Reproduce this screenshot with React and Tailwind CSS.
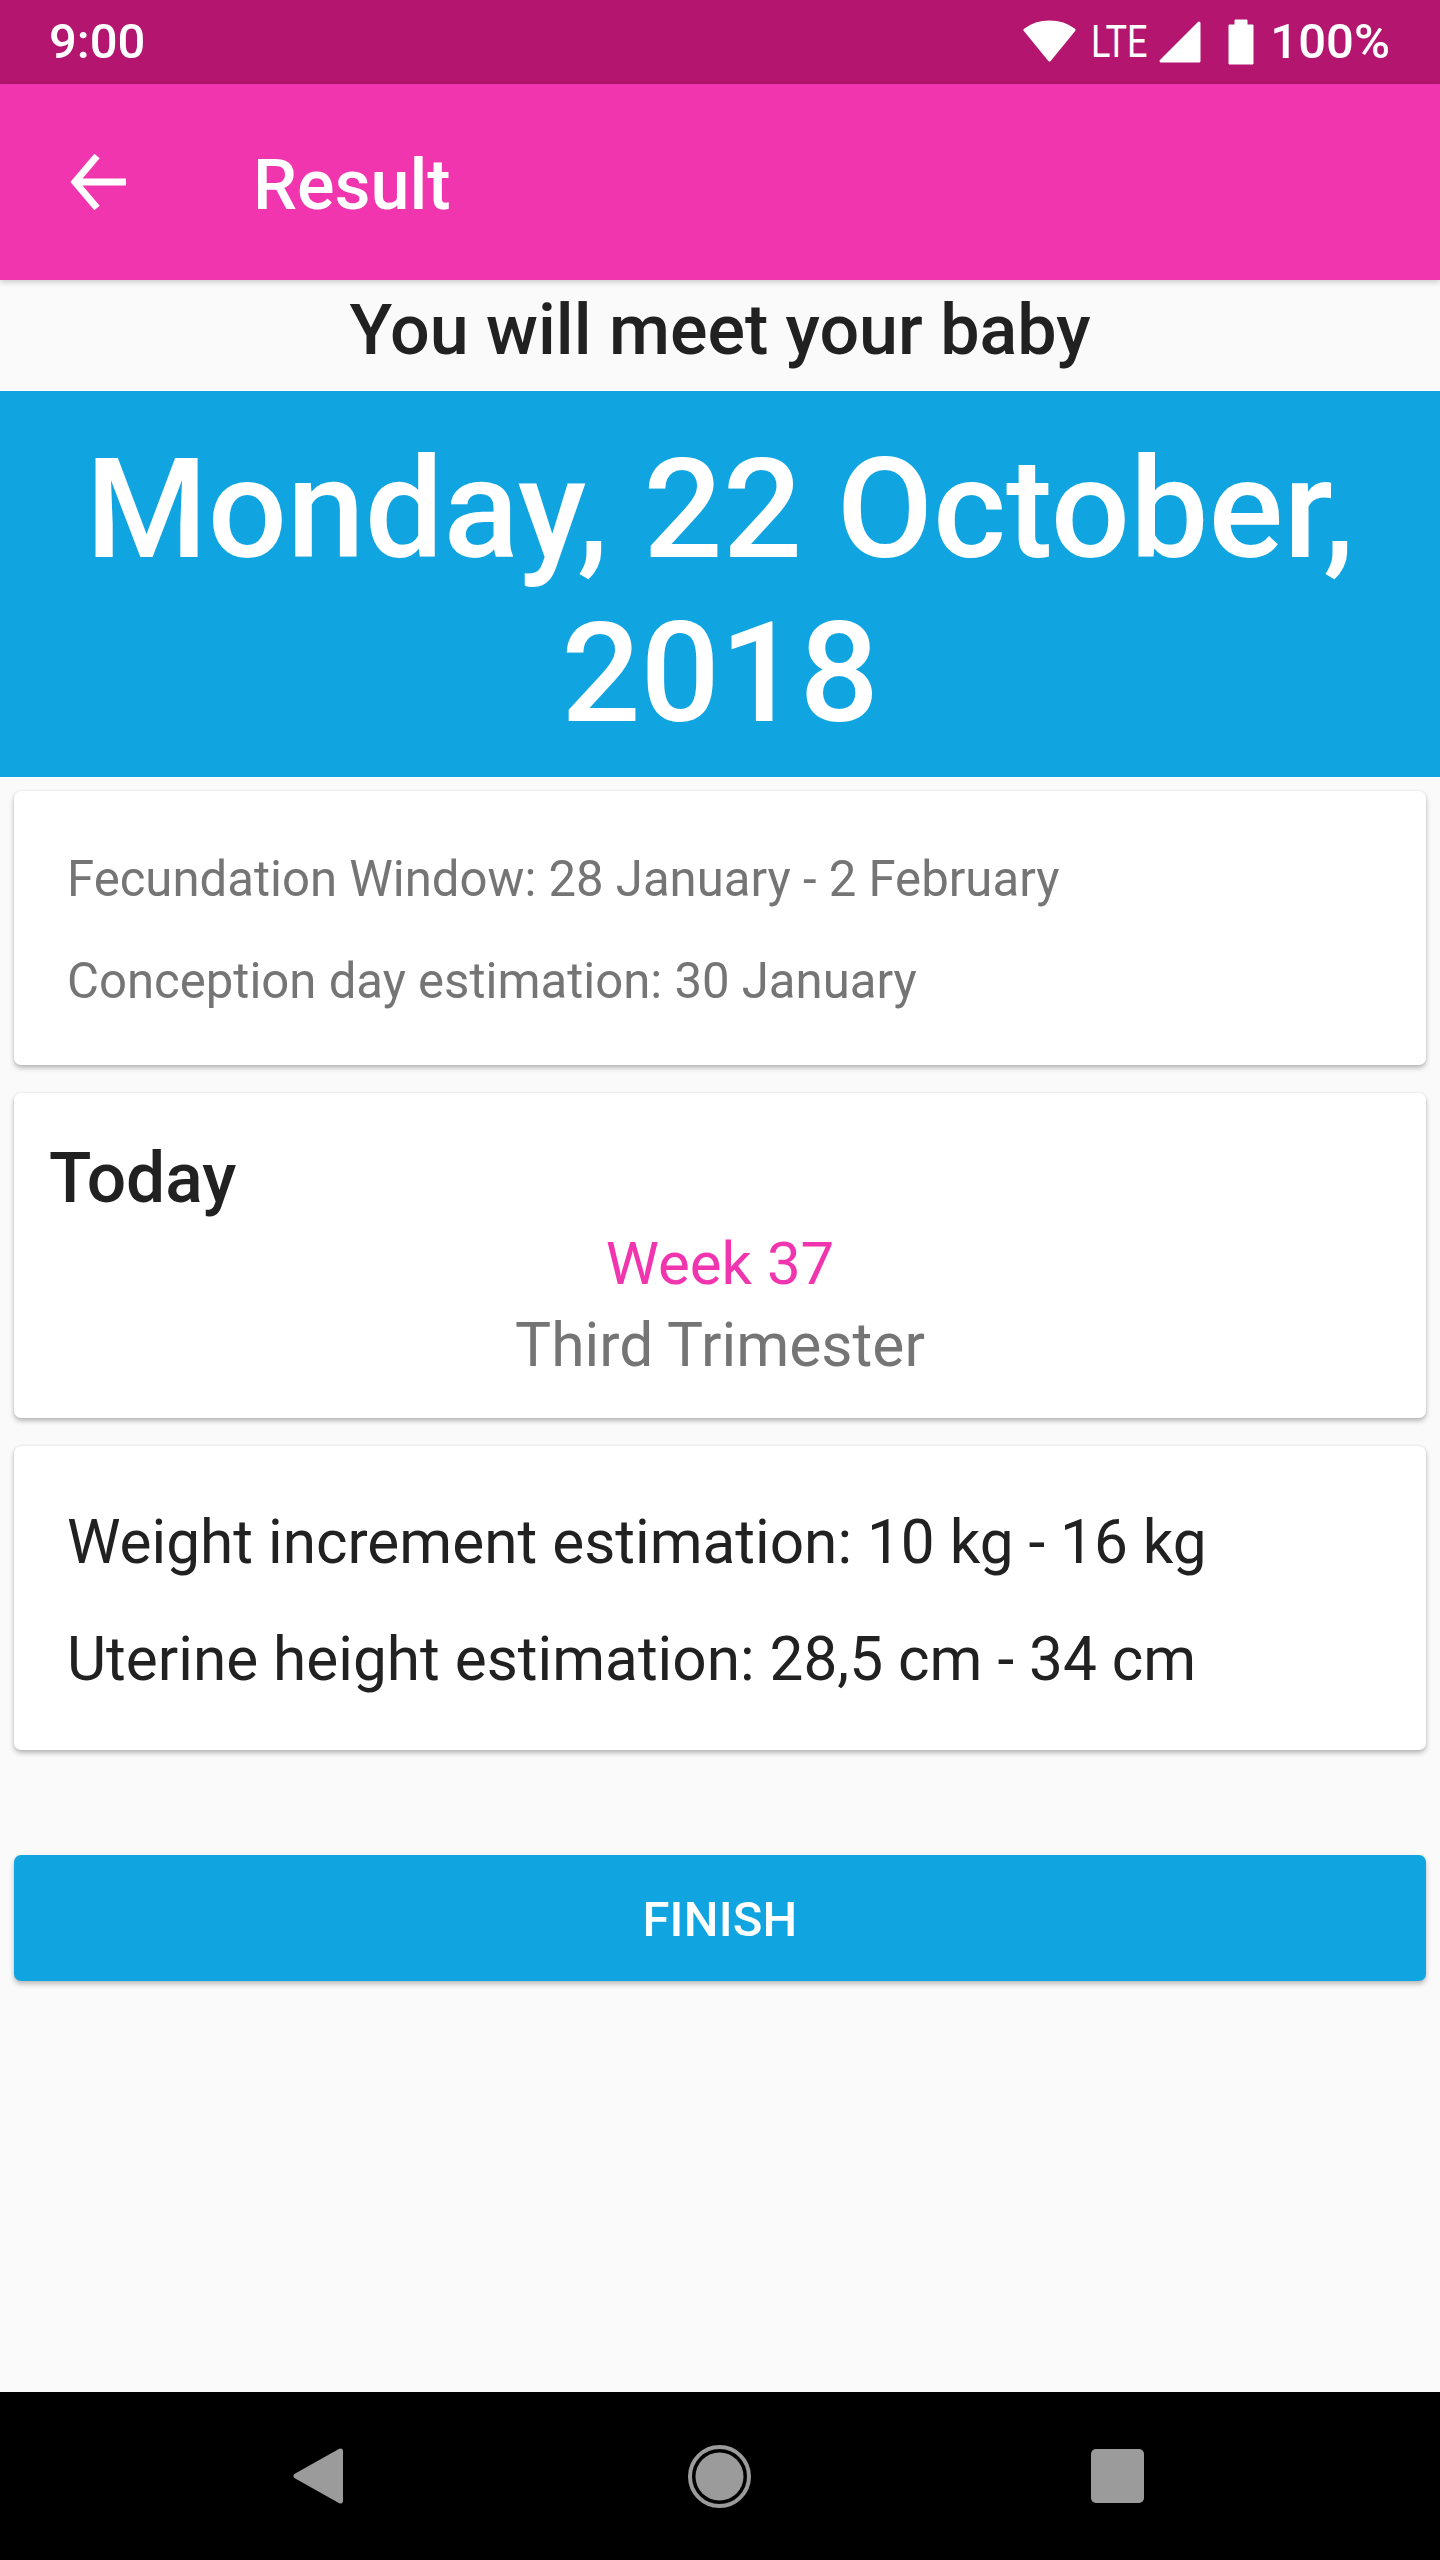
export default function App() {
  const card = "mx-[14px] rounded-[7px] bg-white shadow-[0_3px_5px_rgba(0,0,0,0.26),0_0_3px_rgba(0,0,0,0.08)]";
  return (
    <div className="flex h-[2560px] w-[1440px] flex-col overflow-hidden bg-[#fafafa] font-['Roboto',sans-serif]">
      <div className="flex h-[84px] items-center justify-between bg-[#b3156f] pl-[49px] pr-[50px] text-white">
        <span className="text-[49px] font-medium leading-[84px]">9:00</span>
        <div className="flex items-center">
          <svg width="53" height="42" viewBox="0 0 53 42" className="mr-[15px] mt-[-2px]"><path d="M26.500 40 2 10C9 4.500 17 2 26.500 2S44 4.500 51 10Z" fill="#fff" stroke="#fff" strokeWidth="3" strokeLinejoin="round"/></svg>
          <span className="mr-[11px] w-[57px] origin-left scale-x-[0.82] whitespace-nowrap text-[44px] leading-[84px]">LTE</span>
          <svg width="42" height="42" viewBox="0 0 42 42" className="mr-[27px]"><path d="M2 40 40 2v38Z" fill="#fff" stroke="#fff" strokeWidth="3" strokeLinejoin="round"/></svg>
          <svg width="26" height="46" viewBox="0 0 26 46" className="mr-[16px]"><path d="M1 6h6V1h12v5h6v39H1Z" fill="#fff" stroke="#fff" strokeWidth="1" strokeLinejoin="round"/></svg>
          <span className="text-[49px] font-medium leading-[84px]">100%</span>
        </div>
      </div>
      <div className="z-10 flex h-[196px] items-center bg-[#f135ae] shadow-[0_2px_6px_rgba(0,0,0,0.2)]">
        <svg width="56" height="56" viewBox="0 0 56 56" fill="none" stroke="#fff" strokeWidth="7" className="ml-[70px]"><path d="M56 28H5M27 2 5 28l22 26"/></svg>
        <span className="ml-[127px] mt-[6px] text-[70px] font-medium leading-none text-white">Result</span>
      </div>
      <div className="h-[111px] text-center text-[70px] font-medium leading-[100px] text-[#212121]">You will meet your baby</div>
      <div className="flex h-[386px] items-center justify-center bg-[#10a5e0] px-[40px] pt-[14px] text-center text-[139.7px] font-medium leading-[164px] text-white">Monday, 22 October, 2018</div>
      <div className={card + " mt-[14px] h-[274px] px-[53px] pt-[58px] text-[49.1px] leading-[60px] text-[#757575]"}>
        <p>Fecundation Window: 28 January - 2 February</p>
        <p className="mt-[42px]">Conception day estimation: 30 January</p>
      </div>
      <div className={card + " mt-[28px] h-[325px] px-[35px] pt-[45px]"}>
        <p className="text-[69.5px] font-medium leading-[82px] text-[#212121]">Today</p>
        <p className="mt-[11px] text-center text-[60px] leading-[66px] text-[#f135ae]">Week 37</p>
        <p className="mt-[16px] text-center text-[60.5px] leading-[66px] text-[#757575]">Third Trimester</p>
      </div>
      <div className={card + " mt-[28px] h-[304px] px-[53px] pt-[62px] text-[60.3px] leading-[70px] text-[#212121]"}>
        <p>Weight increment estimation: 10 kg - 16 kg</p>
        <p className="mt-[47px]">Uterine height estimation: 28,5 cm - 34 cm</p>
      </div>
      <button className="mx-[14px] mt-[105px] flex h-[126px] items-center justify-center rounded-[7px] bg-[#10a5e0] pt-[4px] text-[49px] font-medium tracking-[0.2px] text-white shadow-[0_3px_5px_rgba(0,0,0,0.26)]">FINISH</button>
      <div className="mt-auto flex h-[168px] items-center bg-black">
        <svg width="50" height="56" viewBox="0 0 50 56" className="ml-[293px]"><path d="M47.500 3 3 28l44.500 25Z" fill="#9b9b9b" stroke="#9b9b9b" strokeWidth="5" strokeLinejoin="round"/></svg>
        <svg width="63" height="63" viewBox="0 0 63 63" className="ml-[345px]"><circle cx="31.500" cy="31.500" r="29.500" fill="none" stroke="#9b9b9b" strokeWidth="4"/><circle cx="31.500" cy="31.500" r="24" fill="#9b9b9b"/></svg>
        <div className="ml-[340px] h-[54px] w-[53px] rounded-[5px] bg-[#9b9b9b]"></div>
      </div>
    </div>
  );
}
